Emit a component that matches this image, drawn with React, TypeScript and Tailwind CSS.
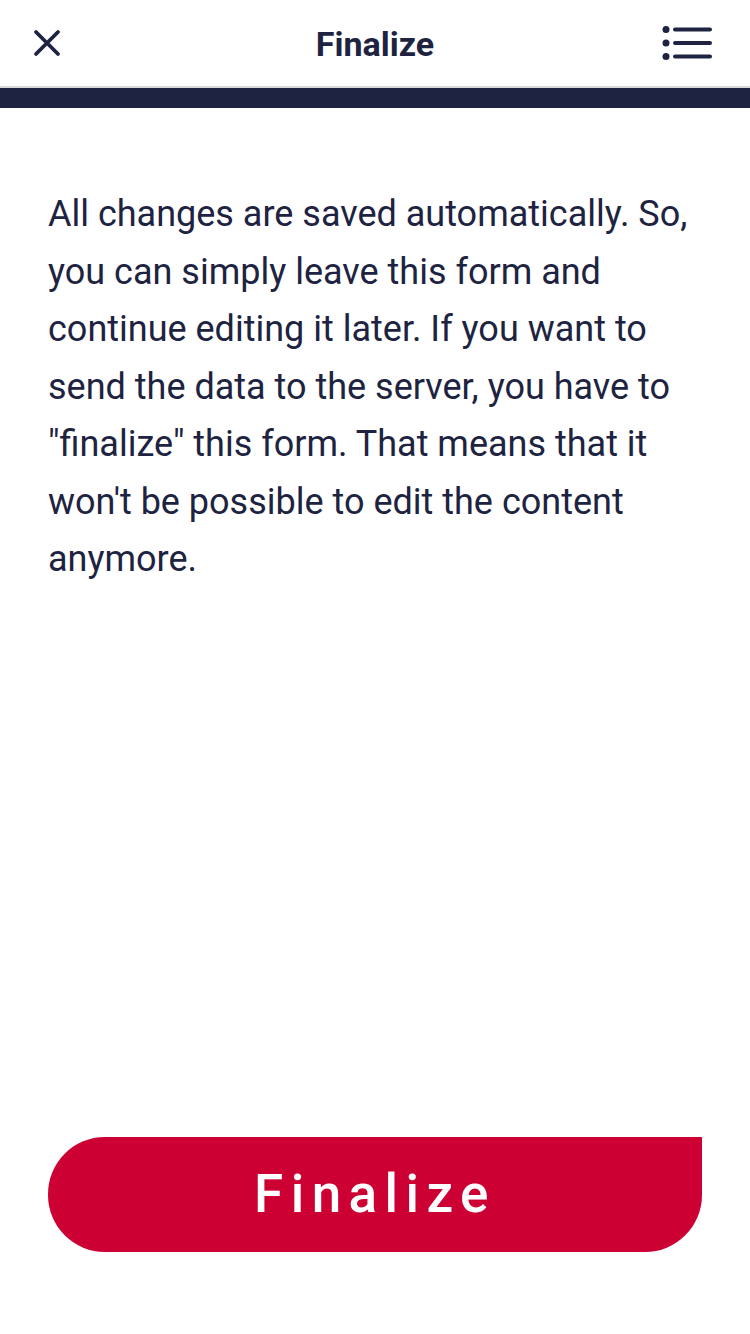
import React from "react";

const CloseIcon = () => (
  <svg width="28" height="28" viewBox="0 0 28 28" fill="none">
    <path
      d="M3 3L25 25M25 3L3 25"
      stroke="#1d2340"
      strokeWidth="3.8"
      strokeLinecap="round"
    />
  </svg>
);

const ListIcon = () => (
  <svg width="50" height="34" viewBox="0 0 50 34" fill="none">
    <circle cx="4" cy="3.5" r="3.5" fill="#1d2340" />
    <circle cx="4" cy="17" r="3.5" fill="#1d2340" />
    <circle cx="4" cy="30.5" r="3.5" fill="#1d2340" />
    <path
      d="M13 3.5H48M13 17H48M13 30.5H48"
      stroke="#1d2340"
      strokeWidth="4"
      strokeLinecap="round"
    />
  </svg>
);

const App = () => {
  return (
    <div
      className="w-[750px] h-[1334px] bg-white flex flex-col text-[#1d2340]"
      style={{ fontFamily: "Roboto, 'Noto Sans', sans-serif" }}
    >
      <header className="h-[88px] grid grid-cols-[1fr_auto_1fr] items-center pl-[33px] pr-[38px] border-b-2 border-[#d9d9d9]">
        <button className="w-[28px] h-[28px] flex items-center justify-center justify-self-start">
          <CloseIcon />
        </button>
        <h1 className="text-[34px] font-bold leading-none pl-[5px] pt-[2px]">Finalize</h1>
        <button className="w-[50px] h-[34px] flex items-center justify-center justify-self-end">
          <ListIcon />
        </button>
      </header>
      <div className="h-[20px] bg-[#1d2340]" />

      <main className="flex-1 flex flex-col px-[48px] pt-[78px] pb-[82px]">
        <p className="text-[36px] leading-[57.5px] text-[#1d2340]">
          All changes are saved automatically. So, you can simply leave this form
          and continue editing it later. If you want to send the data to the
          server, you have to "finalize" this form. That means that it won't be
          possible to edit the content anymore.
        </p>
        <div className="flex-1" />
        <button className="h-[115px] w-full bg-[#cc0033] text-white rounded-tl-[57px] rounded-bl-[57px] rounded-br-[57px] rounded-tr-none text-[53px] font-medium tracking-[0.14em] flex items-center justify-center">
          Finalize
        </button>
      </main>
    </div>
  );
};

export default App;
